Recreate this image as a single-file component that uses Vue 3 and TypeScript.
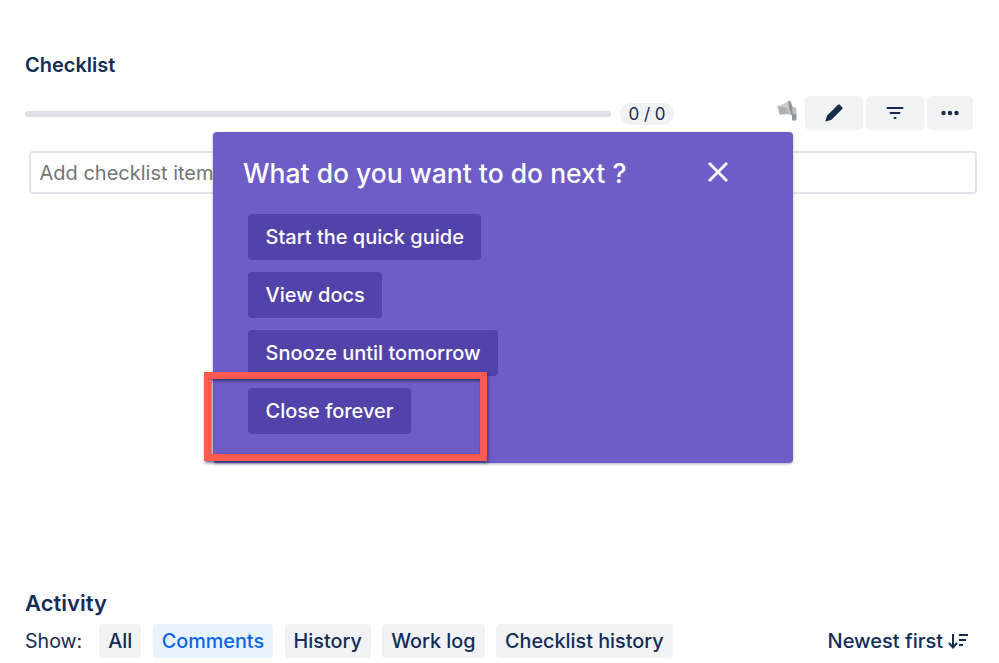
<template>
  <div class="page">
    <section class="checklist">
      <h2 class="title">Checklist</h2>
      <div class="progress-row">
        <div class="progress"></div>
        <span class="count">0 / 0</span>
        <div class="actions">
          <svg class="horn" viewBox="0 0 20 22" width="20" height="22">
            <path d="M0.5 6 C4 5.5 9 3 12 0.5 L15.5 15.5 C11 14 6 14 3 15 Z" fill="#cdcfd1" />
            <path d="M0.5 6 L3 15 C6 14 9 13.5 12.5 14 L10 8 Z" fill="#aeb0b3" />
            <ellipse cx="13.8" cy="8" rx="1.8" ry="7.6" transform="rotate(-12 13.8 8)" fill="#8f9296" />
            <path d="M15 6 L19 8 L19.5 13 L15.5 13.5 Z" fill="#b9bcbf" />
            <rect x="15" y="13.5" width="4.5" height="7" rx="1" fill="#8d98a3" />
          </svg>
          <button class="action pencil">
            <svg viewBox="0 0 18 18" width="18" height="18">
              <path d="M13 .8 a1.3 1.3 0 0 1 1.8 0 l2.4 2.4 a1.3 1.3 0 0 1 0 1.8 L6.4 15.8 .9 17.6 a.4.4 0 0 1-.5-.5 L2.2 11.6 Z" fill="#172b4d" />
            </svg>
          </button>
          <button class="action filter">
            <svg viewBox="0 0 18 18" width="18" height="18">
              <rect x="0.5" y="3" width="17" height="2" rx="1" fill="#172b4d" />
              <rect x="3.5" y="8" width="11" height="2" rx="1" fill="#172b4d" />
              <rect x="7.5" y="13" width="3" height="2" rx="1" fill="#172b4d" />
            </svg>
          </button>
          <button class="action more">
            <svg viewBox="0 0 18 18" width="18" height="18">
              <circle cx="2.5" cy="9" r="2.2" fill="#172b4d" />
              <circle cx="9" cy="9" r="2.2" fill="#172b4d" />
              <circle cx="15.5" cy="9" r="2.2" fill="#172b4d" />
            </svg>
          </button>
        </div>
      </div>
      <input class="add-item" placeholder="Add checklist item" />
    </section>

    <section class="activity">
      <h2 class="title title-large">Activity</h2>
      <div class="tabs">
        <span class="show">Show:</span>
        <button
          v-for="tab in tabs"
          :key="tab"
          :class="['tab', tab === 'Comments' && 'tab-active']"
        >{{ tab }}</button>
        <span class="sort">
          Newest first
          <svg viewBox="0 0 20 16" width="20" height="16">
            <path d="M5 1 V14 M1 10 L5 14.5 L9 10" fill="none" stroke="#172b4d" stroke-width="2" />
            <rect x="11" y="1" width="9" height="2" fill="#172b4d" />
            <rect x="11" y="6" width="7" height="2" fill="#172b4d" />
            <rect x="11" y="11" width="4" height="2" fill="#172b4d" />
          </svg>
        </span>
      </div>
    </section>

    <div class="popup">
      <div class="popup-head">
        <h3 class="popup-title">What do you want to do next ?</h3>
        <svg class="close" viewBox="0 0 22 22" width="22" height="22">
          <path d="M2 2 L20 20 M20 2 L2 20" stroke="#fff" stroke-width="2.8" fill="none" />
        </svg>
      </div>
      <div class="popup-list">
        <button v-for="item in options" :key="item" class="popup-btn">{{ item }}</button>
      </div>
    </div>
    <div class="highlight"></div>
  </div>
</template>

<script setup lang="ts">
const tabs: string[] = ['All', 'Comments', 'History', 'Work log', 'Checklist history']
const options: string[] = ['Start the quick guide', 'View docs', 'Snooze until tomorrow', 'Close forever']
</script>

<style>
html,
body {
  margin: 0;
  background: #fff;
  overflow: hidden;
}
</style>

<style scoped>
.page {
  position: relative;
  width: 999px;
  height: 663px;
  box-sizing: border-box;
  padding: 53px 22px 0 25px;
  font-family: Inter, "Liberation Sans", sans-serif;
  color: #172b4d;
  display: flex;
  flex-direction: column;
  justify-content: space-between;
}

.title {
  margin: 0;
  font-size: 20px;
  line-height: 24px;
  font-weight: 600;
  color: #142c57;
}

.title-large {
  font-size: 22px;
}

.progress-row {
  display: flex;
  align-items: center;
  margin-top: 19px;
  height: 34px;
}

.progress {
  width: 586px;
  height: 6px;
  border-radius: 3px;
  background: #dfe1e6;
  margin-top: 2px;
}

.count {
  margin-left: 9px;
  width: 54px;
  height: 22px;
  line-height: 22px;
  border-radius: 11px;
  background: #f1f2f4;
  text-align: center;
  font-size: 17px;
  margin-top: 2px;
}

.actions {
  margin-left: auto;
  margin-right: 4px;
  display: flex;
  align-items: center;
  gap: 3px;
}

.horn {
  margin-right: 5px;
  margin-top: -4px;
}

.action {
  height: 34px;
  border: 0;
  border-radius: 5px;
  background: #f1f2f4;
  padding: 0;
  display: flex;
  align-items: center;
  justify-content: center;
}

.pencil,
.filter {
  width: 58px;
}

.more {
  width: 46px;
}

.add-item {
  display: block;
  box-sizing: border-box;
  width: 948px;
  height: 43px;
  margin: 21px 0 0 4px;
  padding: 0 9px 0 8.5px;
  border: 2px solid #e3e4ea;
  border-radius: 4px;
  font-family: inherit;
  font-size: 20px;
  outline: none;
}

.add-item::placeholder {
  color: #757575;
  opacity: 1;
}

.activity {
  padding-bottom: 5px;
}

.tabs {
  display: flex;
  align-items: center;
  margin-top: 9px;
  font-size: 19.6px;
}

.show {
  margin-right: 17px;
}

.tab {
  height: 34px;
  border: 0;
  border-radius: 4px;
  background: #f1f2f4;
  color: #142c57;
  padding: 0 9px;
  margin-right: 11.5px;
  font-family: inherit;
  font-size: 19.8px;
  font-weight: 500;
}

.tab-active {
  background: #e9f2ff;
  color: #0c66e4;
}

.sort {
  margin-left: auto;
  margin-right: 9px;
  display: flex;
  align-items: center;
  gap: 5px;
  font-size: 20px;
  font-weight: 500;
  color: #142c57;
}

.popup {
  position: absolute;
  left: 213px;
  top: 132px;
  width: 580px;
  height: 331px;
  box-sizing: border-box;
  padding: 24px 30px;
  background: #6e5dc6;
  border-radius: 4px;
  box-shadow: 0 1px 3px rgba(9, 30, 66, 0.35);
}

.popup-head {
  display: flex;
  align-items: center;
  gap: 81px;
  height: 34px;
}

.close {
  margin-top: -2px;
}

.popup-title {
  margin: 0;
  color: #fff;
  font-size: 26.5px;
  line-height: 34px;
  font-weight: 500;
}

.popup-list {
  margin: 23.5px 0 0 5px;
  display: flex;
  flex-direction: column;
  align-items: flex-start;
  gap: 12px;
}

.popup-btn {
  height: 46px;
  border: 0;
  border-radius: 4px;
  padding: 0 17.5px;
  background: #5243aa;
  color: #fff;
  font-family: inherit;
  font-size: 20px;
  font-weight: 500;
}

.highlight {
  position: absolute;
  left: 204px;
  top: 372px;
  width: 283px;
  height: 89px;
  box-sizing: border-box;
  border: 7px solid #ff5a4f;
  box-shadow: 1px 2px 3px rgba(9, 30, 66, 0.6), inset 1px 2px 3px rgba(9, 30, 66, 0.6);
}
</style>
